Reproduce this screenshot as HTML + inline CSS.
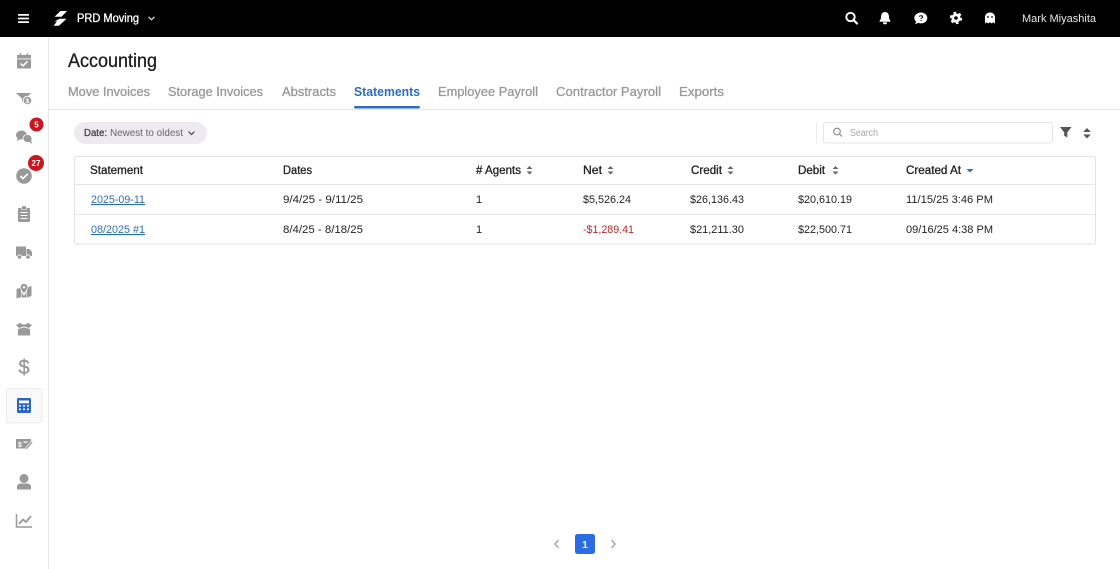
<!DOCTYPE html>
<html><head><meta charset="utf-8"><title>Accounting</title>
<style>
html,body{margin:0;padding:0;background:#fff;width:1120px;height:569px;overflow:hidden}
svg{display:block;filter:blur(.3px)}
text{font-family:"Liberation Sans",sans-serif}
.m{stroke:currentColor;stroke-width:.3}
.h{font-size:11.5px;fill:#222;color:#222}
.c{font-size:11px;fill:#222}
.t{font-size:13px;fill:#989898;color:#989898}
</style></head><body>
<svg width="1120" height="569" viewBox="0 0 1120 569" xmlns="http://www.w3.org/2000/svg">
<rect width="1120" height="569" fill="#fff"/>
<rect width="1120" height="37" fill="#000"/>
<rect x="48" y="37" width="1" height="532" fill="#e8e8e8"/>
<rect x="49" y="109" width="1071" height="1" fill="#e6e6e6"/>

<!-- top bar left -->
<g fill="#fff">
<rect x="18" y="14" width="11" height="1.800" rx=".6"/><rect x="18" y="17.600" width="11" height="1.800" rx=".6"/><rect x="18" y="21.200" width="11" height="1.800" rx=".6"/>
<path d="M60.500 11H67L61.500 16.800H54.500Z"/>
<path d="M59.500 18.800H66.500L59 25.800H53.500L57 21.500H54.500Z"/>
</g>
<text x="77" y="22" font-size="11.500" fill="#fff" color="#fff" class="m" textLength="62" lengthAdjust="spacingAndGlyphs">PRD Moving</text>
<path d="M148.500 16.800L151.500 19.800L154.500 16.800" fill="none" stroke="#ddd" stroke-width="1.200"/>

<!-- top bar right -->
<circle cx="850.500" cy="17" r="4.200" fill="none" stroke="#fff" stroke-width="1.900"/>
<path d="M853.500 20L857 23.500" stroke="#fff" stroke-width="2.200" stroke-linecap="round"/>
<path d="M885 12C881.800 12 881 15 881 17C881 19.500 879.500 20.300 879.500 21.700H890.500C890.500 20.300 889 19.500 889 17C889 15 888.200 12 885 12Z" fill="#fff"/>
<rect x="883" y="22.300" width="4" height="1.900" rx=".9" fill="#fff"/>
<path d="M921 12.500C917.300 12.500 914.300 15 914.300 18C914.300 19.500 915.100 20.800 916.200 21.600L915 24.300L918.300 22.900C919.100 23.200 920 23.400 921 23.400C924.700 23.400 927.300 21 927.300 18C927.300 15 924.700 12.500 921 12.500Z" fill="#fff"/>
<path d="M919.300 16.600C919.500 15.500 922.500 15.300 922.600 16.800C922.600 18 921 17.800 921 19" fill="none" stroke="#000" stroke-width="1"/><circle cx="921" cy="20.500" r=".6" fill="#000"/>
<circle cx="956" cy="18" r="4.600" fill="#fff"/>
<circle cx="956" cy="18" r="5.300" fill="none" stroke="#fff" stroke-width="1.800" stroke-dasharray="2.800 2.750"/>
<circle cx="956" cy="18" r="1.800" fill="#000"/>
<path d="M985 23.500V17.500C985 14.500 987 12.500 990 12.500C993 12.500 995 14.500 995 17.500V23.500L993.300 22.300L991.700 23.500L990 22.300L988.300 23.500L986.700 22.300Z" fill="#fff"/>
<circle cx="988" cy="17" r=".9" fill="#000"/><circle cx="992" cy="17" r=".9" fill="#000"/>
<text x="1022" y="22" font-size="11" fill="#e8e8e8" textLength="74" lengthAdjust="spacingAndGlyphs">Mark Miyashita</text>

<!-- heading -->
<text x="68" y="67" font-size="19" fill="#1c1c1c" color="#1c1c1c" class="m" textLength="89" lengthAdjust="spacingAndGlyphs">Accounting</text>
<text x="68" y="96" class="t m" textLength="82" lengthAdjust="spacingAndGlyphs">Move Invoices</text>
<text x="168" y="96" class="t m" textLength="95" lengthAdjust="spacingAndGlyphs">Storage Invoices</text>
<text x="282" y="96" class="t m" textLength="54" lengthAdjust="spacingAndGlyphs">Abstracts</text>
<text x="354" y="96" font-size="13" font-weight="bold" fill="#2f6bb8" textLength="66" lengthAdjust="spacingAndGlyphs">Statements</text>
<text x="438" y="96" class="t m" textLength="100" lengthAdjust="spacingAndGlyphs">Employee Payroll</text>
<text x="556" y="96" class="t m" textLength="105" lengthAdjust="spacingAndGlyphs">Contractor Payroll</text>
<text x="679" y="96" class="t m" textLength="45" lengthAdjust="spacingAndGlyphs">Exports</text>
<rect x="354" y="106" width="66" height="2.500" rx="1.200" fill="#2f6bc4"/>

<!-- chip -->
<rect x="74" y="122" width="133" height="22" rx="11" fill="#efeaf1"/>
<text x="84" y="136" font-size="10" fill="#444" color="#444" class="m" textLength="23" lengthAdjust="spacingAndGlyphs">Date:</text>
<text x="110" y="136" font-size="10" fill="#666" textLength="73" lengthAdjust="spacingAndGlyphs">Newest to oldest</text>
<path d="M188.500 131.500L191.500 134.500L194.500 131.500" fill="none" stroke="#444" stroke-width="1.200"/>

<!-- search row -->
<rect x="816" y="122" width="1" height="22" fill="#ececec"/>
<rect x="823.500" y="122.500" width="229" height="20.500" rx="2" fill="#fff" stroke="#e4e4e4"/>
<circle cx="837" cy="131.500" r="3.300" fill="none" stroke="#888" stroke-width="1.100"/>
<path d="M839.500 134L842 136.500" stroke="#888" stroke-width="1.200"/>
<text x="850" y="136" font-size="10" fill="#a8a8a8" textLength="28" lengthAdjust="spacingAndGlyphs">Search</text>
<path d="M1060 127H1071.500L1067.300 132.500V137.500L1064.200 135.800V132.500Z" fill="#555"/>
<path d="M1087 128L1090.800 132H1083.200ZM1087 138.500L1083.200 134.500H1090.800Z" fill="#555"/>

<!-- table -->
<rect x="74.500" y="156.500" width="1021" height="87.500" rx="2" fill="#fff" stroke="#e2e2e2"/>
<rect x="75" y="184" width="1020" height="1" fill="#e6e6e6"/>
<rect x="75" y="214" width="1020" height="1" fill="#e8e8e8"/>

<text x="90" y="174" class="h m" textLength="53" lengthAdjust="spacingAndGlyphs">Statement</text>
<text x="283" y="174" class="h m" textLength="29" lengthAdjust="spacingAndGlyphs">Dates</text>
<text x="476" y="174" class="h m" textLength="45" lengthAdjust="spacingAndGlyphs"># Agents</text>
<text x="583" y="174" class="h m" textLength="19" lengthAdjust="spacingAndGlyphs">Net</text>
<text x="691" y="174" class="h m" textLength="31" lengthAdjust="spacingAndGlyphs">Credit</text>
<text x="798" y="174" class="h m" textLength="27" lengthAdjust="spacingAndGlyphs">Debit</text>
<text x="906" y="174" class="h m" textLength="55" lengthAdjust="spacingAndGlyphs">Created At</text>
<g fill="#666">
<path d="M529.500 166L532.500 169H526.500ZM529.500 174.500L526.500 171.500H532.500Z"/>
<path d="M610.500 166L613.500 169H607.500ZM610.500 174.500L607.500 171.500H613.500Z"/>
<path d="M730.500 166L733.500 169H727.500ZM730.500 174.500L727.500 171.500H733.500Z"/>
<path d="M835.500 166L838.500 169H832.500ZM835.500 174.500L832.500 171.500H838.500Z"/>
</g>
<path d="M966.500 169H973.500L970 172.500Z" fill="#2f6bb8"/>

<text x="91" y="203" font-size="11" fill="#2c6fb0" text-decoration="underline" textLength="54" lengthAdjust="spacingAndGlyphs">2025-09-11</text>
<text x="283" y="203" class="c" textLength="80" lengthAdjust="spacingAndGlyphs">9/4/25 - 9/11/25</text>
<text x="476" y="203" class="c">1</text>
<text x="583" y="203" class="c" textLength="48" lengthAdjust="spacingAndGlyphs">$5,526.24</text>
<text x="690" y="203" class="c" textLength="54" lengthAdjust="spacingAndGlyphs">$26,136.43</text>
<text x="798" y="203" class="c" textLength="54" lengthAdjust="spacingAndGlyphs">$20,610.19</text>
<text x="906" y="203" class="c" textLength="87" lengthAdjust="spacingAndGlyphs">11/15/25 3:46 PM</text>

<text x="91" y="233" font-size="11" fill="#2c6fb0" text-decoration="underline" textLength="54" lengthAdjust="spacingAndGlyphs">08/2025 #1</text>
<text x="283" y="233" class="c" textLength="80" lengthAdjust="spacingAndGlyphs">8/4/25 - 8/18/25</text>
<text x="476" y="233" class="c">1</text>
<text x="583" y="233" font-size="11" fill="#b8282c" textLength="51" lengthAdjust="spacingAndGlyphs">-$1,289.41</text>
<text x="690" y="233" class="c" textLength="54" lengthAdjust="spacingAndGlyphs">$21,211.30</text>
<text x="798" y="233" class="c" textLength="54" lengthAdjust="spacingAndGlyphs">$22,500.71</text>
<text x="906" y="233" class="c" textLength="87" lengthAdjust="spacingAndGlyphs">09/16/25 4:38 PM</text>

<!-- pagination -->
<rect x="575" y="534" width="20" height="20" rx="2.500" fill="#2b6de0"/>
<text x="585" y="548" font-size="10.500" font-weight="bold" fill="#fff" text-anchor="middle">1</text>
<path d="M558.500 540L555 544L558.500 548" fill="none" stroke="#999" stroke-width="1.300"/>
<path d="M611.500 540L615 544L611.500 548" fill="none" stroke="#999" stroke-width="1.300"/>

<!-- sidebar -->
<rect x="6.500" y="388.500" width="35.500" height="34.500" rx="3" fill="#f9f9f9" stroke="#ececec"/>
<g fill="#999">
<!-- calendar check -->
<path d="M17 55H31V68.500H17Z"/>
<rect x="19.500" y="53.500" width="1.800" height="3"/><rect x="26.500" y="53.500" width="1.800" height="3"/>
<rect x="17" y="58.500" width="14" height=".8" fill="#fff"/>
<path d="M20.500 63.500L23 65.800L27.500 61.300" fill="none" stroke="#fff" stroke-width="1.500"/>
<!-- filter dollar -->
<path d="M16 93H31L26 98.500V104L22 101.500V98.500Z"/>
<circle cx="27.500" cy="100.500" r="4.300" stroke="#fff" stroke-width="1"/>
<text x="27.500" y="103" font-size="6.500" font-weight="bold" fill="#fff" text-anchor="middle">$</text>
<!-- comments -->
<ellipse cx="21.500" cy="135" rx="5.500" ry="4.500"/>
<path d="M18 138L16.500 141L21 139Z"/>
<ellipse cx="27.500" cy="138.500" rx="4.500" ry="4" stroke="#fff" stroke-width=".8"/>
<path d="M29 141.500L32 144L31 139Z"/>
<!-- check circle -->
<circle cx="24" cy="176" r="7.800"/>
<path d="M20.300 176L23 178.600L27.800 173.800" fill="none" stroke="#fff" stroke-width="1.700"/>
<!-- clipboard -->
<rect x="18" y="208" width="12" height="14" rx="1"/>
<rect x="21.500" y="206" width="5" height="3.500" rx="1" stroke="#fff" stroke-width=".6"/>
<path d="M20.500 212.500H27.500M20.500 215.500H27.500M20.500 218.500H27.500" stroke="#fff" stroke-width="1"/>
<!-- truck -->
<path d="M16 246.500H26V256H16Z"/>
<path d="M26.500 249H29.500L32 252V256H26.500Z"/>
<circle cx="19.500" cy="257" r="2.200" stroke="#fff" stroke-width=".8"/>
<circle cx="28" cy="257" r="2.200" stroke="#fff" stroke-width=".8"/>
<!-- map pin -->
<path d="M16.500 289L21 287.500V297L16.500 298.500Z"/>
<path d="M27 287.500L31.500 286V296L27 297.500Z"/>
<path d="M21.500 292L24 296L26.500 292V297.500L21.500 297.500Z"/>
<path d="M24 283.500C26 283.500 27.800 285 27.800 287.200C27.800 289.300 25 292.500 24 293.800C23 292.500 20.200 289.300 20.200 287.200C20.200 285 22 283.500 24 283.500Z" stroke="#fff" stroke-width=".7"/>
<circle cx="24" cy="287.300" r="1.200" fill="#fff"/>
<!-- boxes -->
<path d="M16 325L20 323L24 325L28 323L32 325L29 328L24 326.500L19 328Z"/>
<path d="M18 329L24 327.500L30 329V335.500H18Z"/>
<!-- dollar -->
<text x="24" y="374" font-size="20" text-anchor="middle" fill="#999" stroke="#999" stroke-width=".4">$</text>
<!-- money edit -->
<path d="M16 439H31L31 441L26 448.500H16Z"/>
<text x="20" y="447" font-size="7" font-weight="bold" fill="#fff" text-anchor="middle">$</text>
<rect x="23.500" y="441.500" width="4" height="1.200" fill="#fff"/>
<path d="M31.500 441L26 447.500L25 450L27.500 449L33 442.500Z" stroke="#fff" stroke-width=".7"/>
<!-- user -->
<circle cx="24" cy="478.500" r="4.500"/>
<path d="M17 489.500V487C17 484.500 19 483.500 21 483.500H27C29 483.500 31 484.500 31 487V489.500Z"/>
</g>
<!-- calculator -->
<rect x="17" y="398" width="14" height="15" rx="1.200" fill="#2b66c4"/>
<rect x="19" y="400.500" width="10" height="2.800" fill="#fff"/>
<g fill="#fff"><rect x="19" y="405" width="2" height="1.600"/><rect x="23" y="405" width="2" height="1.600"/><rect x="27" y="405" width="2" height="1.600"/><rect x="19" y="408.500" width="2" height="1.600"/><rect x="23" y="408.500" width="2" height="1.600"/><rect x="27" y="408.500" width="2" height="1.600"/></g>
<!-- chart -->
<path d="M16.500 514V527H32" fill="none" stroke="#999" stroke-width="1.500"/>
<path d="M19 524L23 519.500L26 522L31 516" fill="none" stroke="#999" stroke-width="1.800"/>

<!-- badges -->
<circle cx="36.500" cy="124.500" r="7" fill="#c8171e"/>
<text x="36.500" y="127.500" font-size="8" font-weight="bold" fill="#fff" text-anchor="middle">5</text>
<circle cx="36" cy="163" r="8" fill="#c8171e"/>
<text x="36" y="166" font-size="8" font-weight="bold" fill="#fff" text-anchor="middle">27</text>
</svg>
</body></html>
